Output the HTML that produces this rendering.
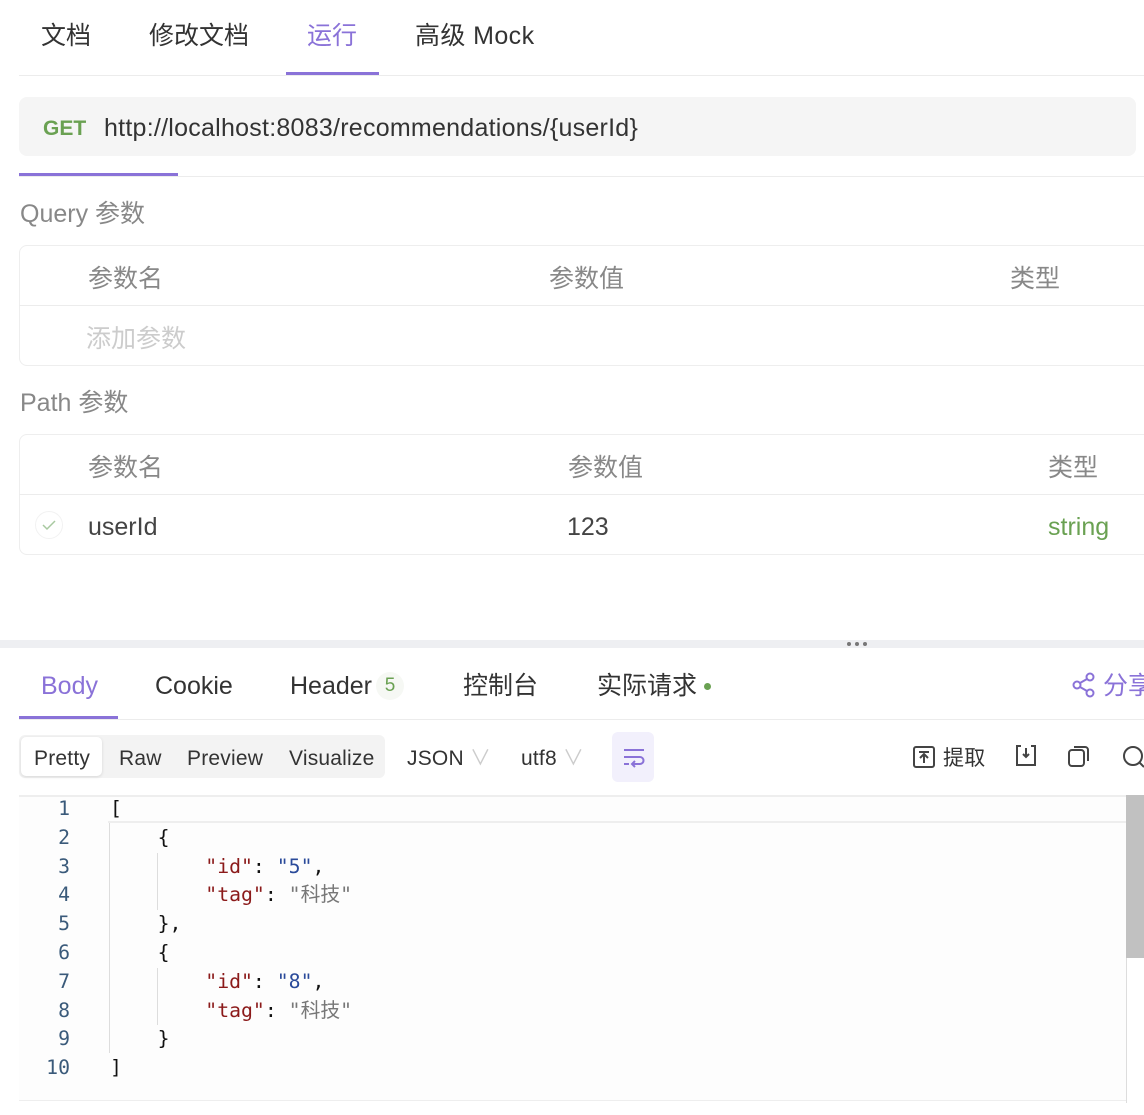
<!DOCTYPE html>
<html><head><meta charset="utf-8">
<style>
*{margin:0;padding:0;box-sizing:border-box}
body{width:1144px;height:1115px;overflow:hidden;background:#fff;position:relative;font-family:"Liberation Sans","Noto Sans CJK SC",sans-serif;color:#333}
.a{position:absolute;white-space:nowrap}
.t{font-size:25px;line-height:30px}
.s{font-size:21px;line-height:26px;letter-spacing:.2px}
.mono{font-family:"DejaVu Sans Mono","Liberation Mono","Noto Sans CJK SC",monospace;font-size:19.8px;line-height:28.8px}
.hl{position:absolute;height:1px;background:#ececec}
</style></head><body>
<div class="a t" style="left:41px;top:21px;color:#333">文档</div>
<div class="a t" style="left:149px;top:21px;color:#333">修改文档</div>
<div class="a t" style="left:307px;top:21px;color:#8a72d8">运行</div>
<div class="a t" style="left:415px;top:21px;color:#333;letter-spacing:.4px">高级 Mock</div>
<div class="hl" style="left:19px;top:75px;width:1125px"></div>
<div class="a" style="left:286px;top:72px;width:93px;height:3px;background:#8a72d8"></div>
<div class="a" style="left:19px;top:97px;width:1117px;height:59px;background:#f5f5f5;border-radius:8px"></div>
<div class="a" style="left:43px;top:116px;font-size:21px;font-weight:bold;color:#6aa152;line-height:26px">GET</div>
<div class="a t" style="left:104px;top:113px;color:#333;letter-spacing:.25px">http://localhost:8083/recommendations/{userId}</div>
<div class="hl" style="left:19px;top:176px;width:1125px"></div>
<div class="a" style="left:19px;top:173px;width:159px;height:3px;background:#8a72d8"></div>
<div class="a t" style="left:20px;top:199px;color:#888">Query 参数</div>
<div class="a" style="left:19px;top:245px;width:1140px;height:121px;border:1px solid #eee;border-radius:8px"></div>
<div class="hl" style="left:19px;top:305px;width:1125px"></div>
<div class="a t" style="left:88px;top:264px;color:#888">参数名</div>
<div class="a t" style="left:549px;top:264px;color:#888">参数值</div>
<div class="a t" style="left:1010px;top:264px;color:#888">类型</div>
<div class="a t" style="left:86px;top:324px;color:#ccc">添加参数</div>
<div class="a t" style="left:20px;top:388px;color:#888">Path 参数</div>
<div class="a" style="left:19px;top:434px;width:1140px;height:121px;border:1px solid #eee;border-radius:8px"></div>
<div class="hl" style="left:19px;top:494px;width:1125px"></div>
<div class="a t" style="left:88px;top:453px;color:#888">参数名</div>
<div class="a t" style="left:568px;top:453px;color:#888">参数值</div>
<div class="a t" style="left:1048px;top:453px;color:#888">类型</div>
<div class="a" style="left:35px;top:511px;width:28px;height:28px;border-radius:50%;border:1px solid #f2f2f2"></div>
<svg class="a" style="left:41px;top:518px" width="16" height="14"><path d="M2 7l4 4 8-8" stroke="#a8c9a0" stroke-width="1.5" fill="none"/></svg>
<div class="a t" style="left:88px;top:512px;color:#444">userId</div>
<div class="a t" style="left:567px;top:512px;color:#444">123</div>
<div class="a t" style="left:1048px;top:512px;color:#6aa152">string</div>
<div class="a" style="left:0;top:640px;width:1144px;height:8px;background:#eeeff2"></div>
<div class="a" style="left:847px;top:642px;width:20px;height:4px;display:flex;justify-content:space-between"><i style="width:4px;height:4px;border-radius:50%;background:#777"></i><i style="width:4px;height:4px;border-radius:50%;background:#777"></i><i style="width:4px;height:4px;border-radius:50%;background:#777"></i></div>
<div class="a t" style="left:41px;top:671px;color:#8a72d8">Body</div>
<div class="a t" style="left:155px;top:671px;color:#333">Cookie</div>
<div class="a t" style="left:290px;top:671px;color:#333">Header</div>
<div class="a" style="left:376px;top:672px;width:28px;height:28px;border-radius:50%;background:#f6f8f4;color:#6aa152;font-size:19px;line-height:28px;text-align:center">5</div>
<div class="a t" style="left:463px;top:671px;color:#333">控制台</div>
<div class="a t" style="left:597px;top:671px;color:#333">实际请求</div>
<div class="a" style="left:704px;top:683px;width:7px;height:7px;border-radius:50%;background:#6aa152"></div>
<svg class="a" style="left:1072px;top:672px" width="24" height="26" viewBox="0 0 24 26"><g stroke="#8a72d8" stroke-width="2" fill="none"><circle cx="18" cy="5" r="3.5"/><circle cx="5" cy="13" r="3.5"/><circle cx="18" cy="21" r="3.5"/><path d="M8 11l7-4M8 15l7 4"/></g></svg>
<div class="a t" style="left:1103px;top:671px;color:#8a72d8">分享</div>
<div class="hl" style="left:19px;top:719px;width:1125px"></div>
<div class="a" style="left:19px;top:716px;width:99px;height:3px;background:#8a72d8"></div>
<div class="a" style="left:19px;top:735px;width:366px;height:43px;background:#f3f3f3;border-radius:6px"></div>
<div class="a" style="left:21px;top:737px;width:81px;height:39px;background:#fff;border-radius:5px;box-shadow:0 1px 3px rgba(0,0,0,.12)"></div>
<div class="a s" style="left:34px;top:746px;color:#333">Pretty</div>
<div class="a s" style="left:119px;top:746px;color:#333">Raw</div>
<div class="a s" style="left:187px;top:746px;color:#333">Preview</div>
<div class="a s" style="left:289px;top:746px;color:#333">Visualize</div>
<div class="a s" style="left:407px;top:746px;color:#333">JSON <span style="color:#ccc">∨</span></div>
<div class="a s" style="left:521px;top:746px;color:#333">utf8 <span style="color:#ccc">∨</span></div>
<div class="a" style="left:612px;top:732px;width:42px;height:50px;background:#f2f0fc;border-radius:6px"></div>
<svg class="a" style="left:622px;top:746px" width="24" height="24" viewBox="0 0 24 24"><g stroke="#8a72d8" stroke-width="2" fill="none"><path d="M2 4h20M2 11h16a3.5 3.5 0 010 7h-7M2 18h5M13 15l-3 3 3 3"/></g></svg>
<svg class="a" style="left:913px;top:746px" width="22" height="22" viewBox="0 0 22 22"><g stroke="#444" stroke-width="2" fill="none"><rect x="1" y="1" width="20" height="20" rx="2"/><path d="M6 6h10M11 17V9M7 12l4-4 4 4"/></g></svg>
<div class="a s" style="left:943px;top:746px;color:#333">提取</div>
<svg class="a" style="left:1015px;top:745px" width="22" height="22" viewBox="0 0 22 22"><g stroke="#444" stroke-width="2" fill="none"><path d="M6 1H2v19h18V1h-4M11 3v9M8 9l3 3 3-3"/></g></svg>
<svg class="a" style="left:1068px;top:745px" width="22" height="22" viewBox="0 0 22 22"><g stroke="#444" stroke-width="2" fill="none"><rect x="1" y="5" width="15" height="16" rx="3"/><path d="M6 2h11a3 3 0 013 3v11"/></g></svg>
<svg class="a" style="left:1122px;top:745px" width="22" height="24" viewBox="0 0 22 24"><g stroke="#444" stroke-width="2" fill="none"><circle cx="11" cy="11" r="9"/><path d="M17 17l5 5"/></g></svg>
<div class="a" style="left:19px;top:795px;width:1108px;height:306px;background:#fdfdfd;border-top:2px solid #eee;border-bottom:1px solid #eee"></div>
<div class="a" style="left:108px;top:797px;width:1019px;height:26px;border-bottom:2px solid #eee"></div>
<div class="a" style="left:1126px;top:795px;width:18px;height:163px;background:#c1c1c1"></div>
<div class="a" style="left:1126px;top:958px;width:1px;height:145px;background:#ddd"></div>
<div class="a" style="left:109px;top:823px;width:1px;height:230px;background:#ddd"></div>
<div class="a" style="left:157px;top:853px;width:1px;height:57px;background:#ddd"></div>
<div class="a" style="left:157px;top:968px;width:1px;height:57px;background:#ddd"></div>
<div class="a mono" style="left:28px;top:795px;width:42px;text-align:right;color:#3a5a7a">1<br>2<br>3<br>4<br>5<br>6<br>7<br>8<br>9<br>10</div>
<div class="a mono" style="left:110px;top:795px;color:#111;white-space:pre">[
    {
        <span style="color:#8b1a1a">"id"</span>: <span style="color:#2a4a9a">"5"</span>,
        <span style="color:#8b1a1a">"tag"</span>: <span style="color:#777">"科技"</span>
    },
    {
        <span style="color:#8b1a1a">"id"</span>: <span style="color:#2a4a9a">"8"</span>,
        <span style="color:#8b1a1a">"tag"</span>: <span style="color:#777">"科技"</span>
    }
]</div>
</body></html>
